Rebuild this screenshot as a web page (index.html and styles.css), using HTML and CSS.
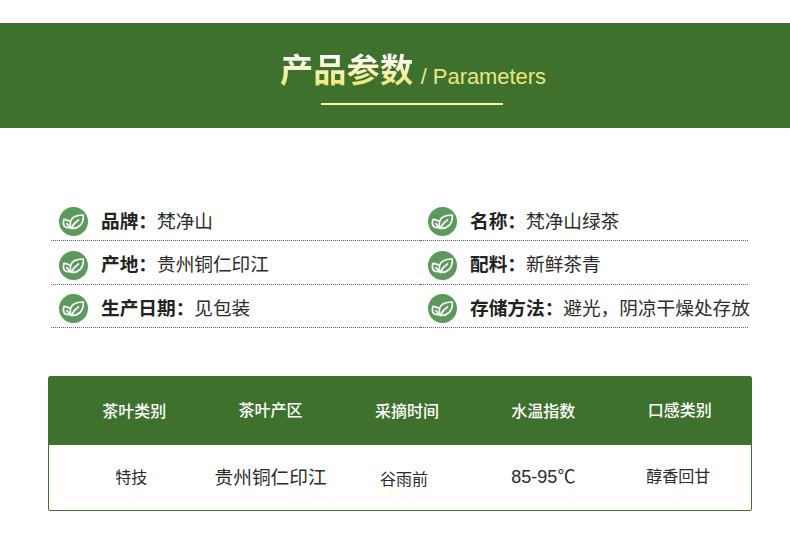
FILE: index.html
```html
<!DOCTYPE html>
<html lang="zh">
<head>
<meta charset="utf-8">
<title>产品参数</title>
<link rel="stylesheet" href="styles.css">
</head>
<body>
<svg class="defs" width="0" height="0" aria-hidden="true">
  <symbol id="leaf" viewBox="0 0 29 29">
    <circle cx="14.5" cy="14.5" r="14.5" fill="#5b9a5c"/>
    <g fill="none" stroke="#fff" stroke-width="1.7" stroke-linecap="round" stroke-linejoin="round">
      <path d="M12 21.300C10.500 16 11.500 12 15 10C17.500 8.500 21 8 24.300 8C24.600 12 23.500 16 21 18.500C18.500 20.800 15 21.800 12 21.300z"/>
      <path d="M12.500 20.800C14 17.500 16.500 15 19.500 13"/>
      <path d="M10.800 20.600C7.500 21 5 19.600 4.500 17C4.300 15.500 4.500 13.800 5 12.300C6.800 12.300 8.800 13 10.300 14"/>
      <path d="M10.300 19.800C9.600 18.500 8.800 17.500 7.800 16.700"/>
    </g>
  </symbol>
</svg>
<header class="banner">
  <div class="heading">
    <h1 class="heading-cn">产品参数</h1>
    <span class="heading-en">/ Parameters</span>
  </div>
  <div class="rule"></div>
</header>
<section class="specs">
  <div class="spec">
    <svg class="leaf"><use href="#leaf"/></svg>
    <span class="spec-text"><b>品牌<span class="colon">：</span></b>梵净山</span>
  </div>
  <div class="spec">
    <svg class="leaf"><use href="#leaf"/></svg>
    <span class="spec-text"><b>名称<span class="colon">：</span></b>梵净山绿茶</span>
  </div>
  <div class="spec">
    <svg class="leaf"><use href="#leaf"/></svg>
    <span class="spec-text"><b>产地<span class="colon">：</span></b>贵州铜仁印江</span>
  </div>
  <div class="spec">
    <svg class="leaf"><use href="#leaf"/></svg>
    <span class="spec-text"><b>配料<span class="colon">：</span></b>新鲜茶青</span>
  </div>
  <div class="spec">
    <svg class="leaf"><use href="#leaf"/></svg>
    <span class="spec-text"><b>生产日期<span class="colon">：</span></b>见包装</span>
  </div>
  <div class="spec">
    <svg class="leaf"><use href="#leaf"/></svg>
    <span class="spec-text"><b>存储方法<span class="colon">：</span></b>避光，阴凉干燥处存放</span>
  </div>
</section>
<section class="table">
  <div class="table-head">
    <div>茶叶类别</div>
    <div class="raise">茶叶产区</div>
    <div>采摘时间</div>
    <div>水温指数</div>
    <div class="raise">口感类别</div>
  </div>
  <div class="table-body">
    <div class="nudge-far">特技</div>
    <div class="large">贵州铜仁印江</div>
    <div class="lower nudge-far">谷雨前</div>
    <div class="temp">85-95℃</div>
    <div class="raise nudge-near">醇香回甘</div>
  </div>
</section>
</body>
</html>
```
FILE: styles.css
```css
* { box-sizing: border-box; }
html, body { margin: 0; padding: 0; background: #fff; }
body {
  width: 790px;
  height: 554px;
  overflow: hidden;
  padding-top: 23px;
  font-family: "Liberation Sans", "Noto Sans CJK SC", sans-serif;
  color: #222;
}
.defs { display: block; height: 0; }
.banner {
  height: 105px;
  background: #3e712d;
  display: flex;
  flex-direction: column;
  align-items: center;
  padding-top: 23px;
}
.heading {
  display: flex;
  align-items: flex-start;
  height: 44px;
  margin-left: 36px;
  gap: 7.500px;
}
.heading-cn {
  margin: 0;
  font-size: 33.300px;
  line-height: 44px;
  font-weight: 700;
  font-family: "Noto Sans CJK SC", sans-serif;
  background: linear-gradient(#ffffff 25%, #f0e77e 85%);
  -webkit-background-clip: text;
  background-clip: text;
  color: transparent;
}
.heading-en {
  font-size: 21.900px;
  line-height: 44px;
  margin-top: 9px;
  color: #ece67f;
}
.rule {
  width: 182px;
  height: 2px;
  margin-top: 13px;
  margin-left: 33px;
  background: #fbf1a4;
}
.specs {
  display: grid;
  grid-template-columns: 369px 328px;
  margin: 61px 0 0 51px;
  width: 697px;
  grid-auto-rows: 43.500px;
  padding-top: 8.500px;
}
.spec {
  display: flex;
  align-items: center;
  height: 43.500px;
  border-bottom: 1px dotted #666;
  padding: 6px 0 0 8px;
  gap: 13px;
  white-space: nowrap;
}
.leaf { width: 29px; height: 29px; flex: none; }
.spec-text {
  font-size: 18.670px;
  line-height: 24px;
  margin-bottom: 4px;
  color: #2b2b2b;
  font-family: "Noto Sans CJK SC", sans-serif;
}
.spec-text b { color: #222; font-weight: 700; }
.colon { font-family: "Noto Sans CJK TC", sans-serif; }
.table {
  width: 704px;
  height: 135px;
  margin: 48px 0 0 48px;
  border: 1px solid #3e712d;
  border-radius: 2px;
}
.table-head, .table-body {
  display: grid;
  grid-template-columns: repeat(5, 136.400px);
  padding-left: 17px;
  text-align: center;
  font-family: "Noto Sans CJK SC", sans-serif;
  font-size: 16px;
}
.table-head {
  height: 68px;
  background: #3e712d;
  color: #fff;
  font-weight: 500;
  line-height: 66px;
}
.table-head .raise { line-height: 64px; }
.table-body {
  height: 65px;
  color: #2a2a2a;
  line-height: 63px;
}
.table-body .raise { line-height: 61px; }
.table-body .lower { line-height: 66px; }
.table-body .large { font-size: 18.670px; line-height: 61px; }
.table-body .temp { font-family: "Liberation Sans", "Noto Sans CJK SC", sans-serif; font-size: 18px; line-height: 65px; }
.table-body .nudge-far { padding-right: 6px; }
.table-body .nudge-near { padding-right: 3px; }
```
